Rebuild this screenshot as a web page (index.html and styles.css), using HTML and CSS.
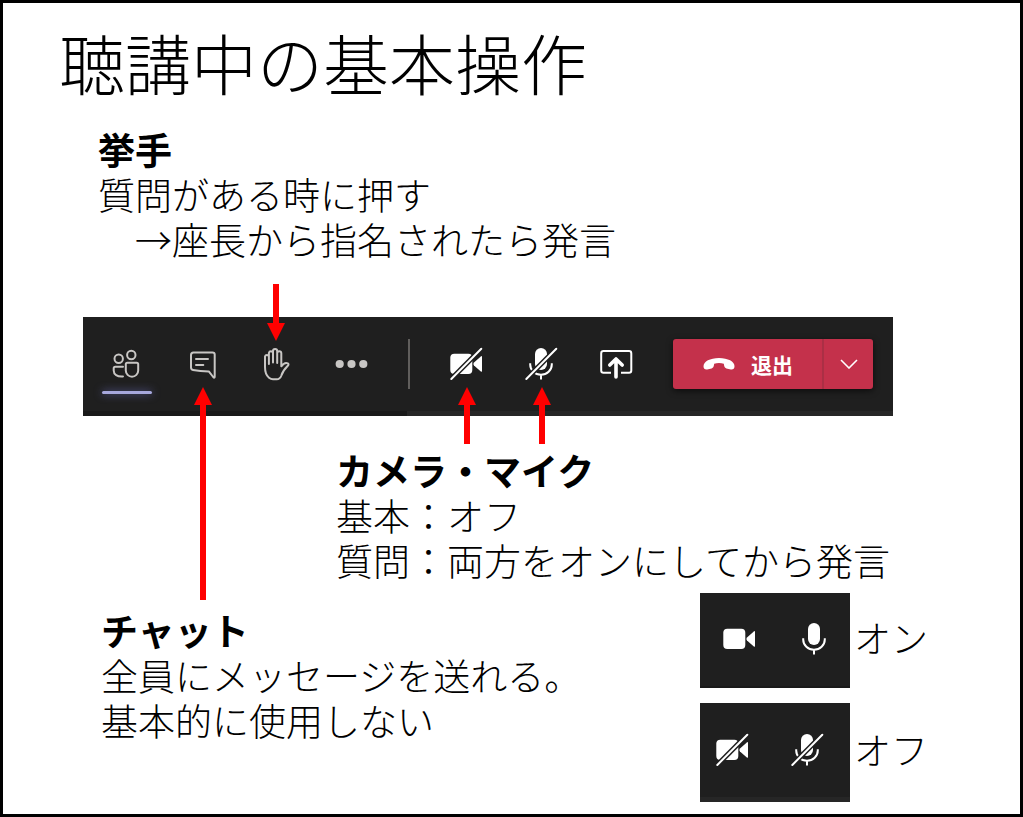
FILE: index.html
```html
<!DOCTYPE html>
<html lang="ja">
<head>
<meta charset="utf-8">
<meta name="viewport" content="width=device-width, initial-scale=1">
<title>聴講中の基本操作</title>
<link rel="stylesheet" href="styles.css">
</head>
<body>
<svg class="defs" aria-hidden="true">
  <symbol id="camera" viewBox="0 0 51 50">
    <rect x="10.3" y="14.7" width="22" height="20.3" rx="4"/>
    <path d="M34 23.6 40.8 17.4Q42 16.6 42 18V32Q42 33.4 40.8 32.4L34 26.4Q32.6 25 34 23.6Z"/>
  </symbol>
  <symbol id="mic" viewBox="0 0 51 50">
    <rect x="20" y="9" width="12" height="22" rx="6"/>
    <path d="M15.2 24.3V25.5A10.8 10.3 0 0 0 36.8 25.5V24.3M26 36V40.5" fill="none" stroke="#fff" stroke-width="2"/>
  </symbol>
  <symbol id="slash" viewBox="0 0 51 50">
    <path d="M11.5 39.8 41.3 9.8" stroke="#1f1f1f" stroke-width="5"/>
    <path d="M11.3 40 41.3 9.8" stroke="#fff" stroke-width="2" stroke-linecap="round"/>
  </symbol>
</svg>
<main class="slide">
  <h1 class="title">聴講中の基本操作</h1>

  <section class="note note-hand">
    <h2>挙手</h2>
    <p>質問がある時に押す</p>
    <p class="indent">→座長から指名されたら発言</p>
  </section>

  <div class="toolbar" role="toolbar" aria-label="会議コントロール">
    <div class="tool active">
      <button type="button" aria-label="参加者"><svg class="icon line" viewBox="0 0 51 50"><circle cx="17.7" cy="19.7" r="4.2"/><circle cx="30.3" cy="16" r="4.2"/><path d="M22 27.7H14.3Q12.7 27.7 12.7 29.3V31.5C12.7 35.5 16 37.8 22 37.4M26.3 23.7H35.7Q37.2 23.7 37.2 25.2V31.5A6.2 6.2 0 0 1 24.8 31.5V25.2Q24.8 23.7 26.3 23.7Z"/></svg></button>
    </div>
    <div class="tool">
      <button type="button" aria-label="チャット"><svg class="icon line" viewBox="0 0 51 50"><path d="M17.5 13.4H36.5Q38.7 13.4 38.7 15.6V37.4Q38.7 39.6 37.2 38L32.8 32.4C27 32.4 22 32 17 31Q15 30.6 15 28.5V15.9Q15 13.4 17.5 13.4ZM20 20.1H32M20 25.9H27.3"/></svg></button>
      <span class="arrow up long"></span>
    </div>
    <div class="tool">
      <button type="button" aria-label="挙手"><svg class="icon line thin" viewBox="0 0 51 50"><path d="M14 17.5V28C14 34 15.8 37 18 38.7Q20 40.3 22 40.3H25.8C28.2 40.3 29.6 38.6 30.4 36.5C31.6 32.5 34 29.6 36.8 26.8Q38.2 25.2 36.8 24.4C35 23.6 32.4 24.5 30.3 27.3V14.3A2 2 0 0 0 26.2 14.3V12.2A2.1 2.1 0 0 0 22 12.2V14A2.1 2.1 0 0 0 17.9 14V17.5A2 2 0 0 0 14 17.5M17.9 17V25M22 13.5V23.5M26.2 13.5V24"/></svg></button>
      <span class="arrow down"></span>
    </div>
    <div class="tool">
      <button type="button" aria-label="その他"><svg class="icon dots" viewBox="0 0 51 50"><circle cx="13.7" cy="25" r="4.1"/><circle cx="25.5" cy="25" r="4.1"/><circle cx="37.3" cy="25" r="4.1"/></svg></button>
    </div>
    <span class="divider"></span>
    <div class="tool">
      <button type="button" aria-label="カメラ オフ"><svg class="icon" viewBox="0 0 51 50"><use href="#camera"/><use href="#slash"/></svg></button>
      <span class="arrow up"></span>
    </div>
    <div class="tool">
      <button type="button" aria-label="マイク オフ"><svg class="icon" viewBox="0 0 51 50"><use href="#mic"/><use href="#slash"/></svg></button>
      <span class="arrow up"></span>
    </div>
    <div class="tool">
      <button type="button" aria-label="共有"><svg class="icon" viewBox="0 0 51 50"><path d="M21 33.7H13.5Q11.2 33.7 11.2 31.4V14.4Q11.2 12.1 13.5 12.1H39Q41.3 12.1 41.3 14.4V31.4Q41.3 33.7 39 33.7H31" fill="none" stroke="#fff" stroke-width="2"/><path d="M26 38V20.5M19.8 26 26 20 32.2 26" fill="none" stroke="#fff" stroke-width="3.6" stroke-linecap="round" stroke-linejoin="round"/></svg></button>
    </div>
    <div class="leave">
      <button type="button" class="leave-main"><svg class="phone" viewBox="0 0 32 14"><path d="M16 1C25 1 31.5 4.6 31.5 9.2C31.5 11.6 30 12.8 27.8 12.4L23.4 11.4C21.6 11 21.2 9.6 20.8 6.8C17.8 5.8 14.2 5.8 11.2 6.8C10.8 9.6 10.4 11 8.6 11.4L4.2 12.4C2 12.8.5 11.6.5 9.2C.5 4.6 7 1 16 1Z"/></svg>退出</button>
      <button type="button" class="leave-more" aria-label="退出オプション"><svg class="chevron" viewBox="0 0 18 10"><path d="M1 1 9 9 17 1"/></svg></button>
    </div>
  </div>

  <section class="note note-camera">
    <h2>カメラ・マイク</h2>
    <p>基本：オフ</p>
    <p>質問：両方をオンにしてから発言</p>
  </section>

  <div class="bottom">
    <section class="note note-chat">
      <h2>チャット</h2>
      <p>全員にメッセージを送れる。</p>
      <p>基本的に使用しない</p>
    </section>
    <div class="samples">
      <div class="sample">
        <div class="panel on"><svg class="icon" viewBox="0 0 51 50"><use href="#camera"/></svg><svg class="icon" viewBox="0 0 51 50"><use href="#mic"/></svg></div>
        <span class="state">オン</span>
      </div>
      <div class="sample">
        <div class="panel off"><svg class="icon" viewBox="0 0 51 50"><use href="#camera"/><use href="#slash"/></svg><svg class="icon" viewBox="0 0 51 50"><use href="#mic"/><use href="#slash"/></svg></div>
        <span class="state">オフ</span>
      </div>
    </div>
  </div>
</main>
</body>
</html>
```
FILE: styles.css
```css
* {
  box-sizing: border-box;
}

body {
  margin: 0;
  background: #fff;
  color: #000;
  font-family: "Noto Sans CJK JP", sans-serif;
  font-size: 37px;
  font-weight: 300;
  line-height: 45px;
}

h1,
h2,
p {
  margin: 0;
}

.defs {
  position: absolute;
  width: 0;
  height: 0;
}

.slide {
  min-height: 100vh;
  padding: 18px 80px 12px;
  border: 3px solid #000;
}

.title {
  margin-left: -24px;
  font-size: 66px;
  font-weight: 300;
  line-height: 80px;
}

.note {
  white-space: nowrap;
}

.note h2 {
  font-size: 37px;
  font-weight: 700;
  line-height: 45px;
}

.note-hand {
  margin: 26px 0 55px 15px;
}

.indent {
  padding-left: 1em;
}

.toolbar {
  display: flex;
  margin-right: 47px;
  padding: 22px 20px 27px 6px;
  background:
    linear-gradient(#191919, #191919) 0 100% / 40% 5px no-repeat,
    linear-gradient(#262626, #262626) 0 100% / 100% 5px no-repeat,
    #1f1f1f;
}

button {
  border: 0;
  padding: 0;
  background: none;
  color: #fff;
  font-family: inherit;
}

.tool {
  position: relative;
}

.tool button {
  display: flex;
  justify-content: center;
  width: 75px;
}

.icon {
  display: block;
  width: 51px;
  height: 50px;
  fill: #fff;
}

.icon.line {
  fill: none;
  stroke: #c8c6c4;
  stroke-width: 2;
  stroke-linecap: round;
  stroke-linejoin: round;
}

.icon.dots {
  fill: #c8c6c4;
}

.active::after {
  content: "";
  position: absolute;
  bottom: -5px;
  left: 13px;
  width: 50px;
  height: 3px;
  border-radius: 2px;
  background: #a6a7dc;
  box-shadow: 0 0 8px #6264a7;
}

.divider {
  width: 2px;
  margin: 0 18px 0 19px;
  background: #605e5c;
}

.arrow {
  position: absolute;
  z-index: 1;
  width: 18px;
  height: 57px;
  background: #f00;
}

.arrow.up {
  top: 48px;
  left: 30px;
  clip-path: polygon(50% 0, 100% 18px, 12px 18px, 12px 100%, 6px 100%, 6px 18px, 0 18px);
}

.arrow.down {
  bottom: 48px;
  left: 28px;
  clip-path: polygon(6px 0, 12px 0, 12px 39px, 100% 39px, 50% 100%, 0 39px, 6px 39px);
}

.arrow.long {
  height: 213px;
}

.leave {
  display: flex;
  margin-left: auto;
  border-radius: 3px;
  background: #c4314b;
  box-shadow: 0 2px 6px #0009;
}

.leave-main {
  display: flex;
  align-items: center;
  gap: 16px;
  padding: 0 29px 0 30px;
  font-size: 21px;
  font-weight: 700;
}

.leave-more {
  display: grid;
  place-items: center;
  width: 51px;
  border-left: 2px solid #ab2f45;
}

.phone {
  width: 32px;
  height: 14px;
  fill: #fff;
}

.chevron {
  width: 18px;
  height: 10px;
  fill: none;
  stroke: #fff;
  stroke-width: 1.6;
}

.note-camera {
  margin: 32px 0 10px 253px;
}

.bottom {
  display: flex;
  justify-content: space-between;
  align-items: flex-start;
}

.note-chat {
  margin: 15px 0 0 18px;
}

.samples {
  display: grid;
  gap: 15px;
  margin-right: 12px;
}

.sample {
  display: flex;
  align-items: center;
  gap: 4px;
}

.state {
  padding-bottom: 6px;
}

.panel {
  display: flex;
  gap: 24px;
  width: 150px;
}

.panel.on {
  padding: 21px 0 22px 13px;
  border-bottom: 2px solid #191919;
  background: #1f1f1f;
}

.panel.off {
  padding: 22px 0 22px 6px;
  border-bottom: 5px solid #262626;
  background: #1f1f1f;
}
```
